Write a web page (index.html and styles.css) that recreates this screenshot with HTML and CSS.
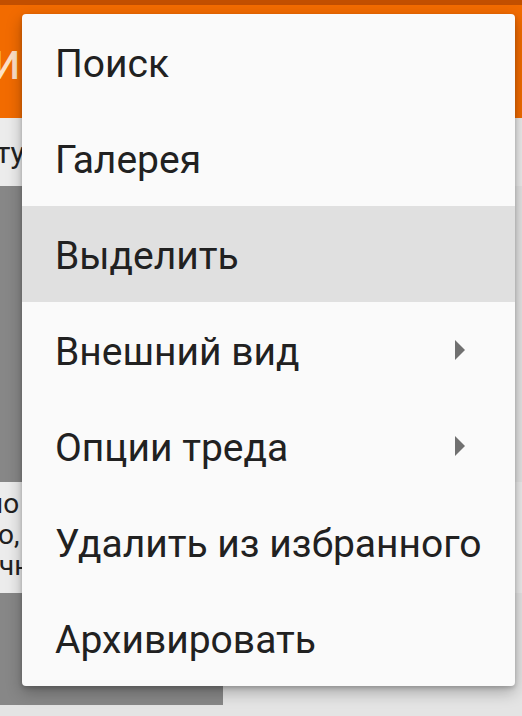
FILE: index.html
```html
<!DOCTYPE html>
<html lang="ru">
<head>
    <meta charset="UTF-8">
    <meta name="viewport" content="width=device-width, initial-scale=1.0">
    <title>Меню треда</title>
    <link rel="stylesheet" href="styles.css">
</head>
<body>
    <div class="statusbar"></div>
    <div class="toolbar">
        <span class="toolbar-title">ИРЫ</span>
    </div>

    <div class="content">
        <div class="post-line"><span class="cut">ту</span></div>
        <div class="thumb"></div>
        <div class="snippet">
            <p class="l1">но</p>
            <p class="l2">о, д</p>
            <p class="l3">чн</p>
        </div>
        <div class="thumb small"></div>
    </div>

    <ul class="popup-menu">
        <li class="menu-item">Поиск</li>
        <li class="menu-item">Галерея</li>
        <li class="menu-item pressed">Выделить</li>
        <li class="menu-item has-sub">Внешний вид <span class="sub-arrow"></span></li>
        <li class="menu-item has-sub">Опции треда <span class="sub-arrow"></span></li>
        <li class="menu-item">Удалить из избранного</li>
        <li class="menu-item">Архивировать</li>
    </ul>
</body>
</html>
```

FILE: styles.css
```css
body {
    margin: 0;
    width: 522px;
    height: 716px;
    overflow: hidden;
    position: relative;
    background-color: #e4e4e4;
    font-family: Roboto, "Noto Sans", sans-serif;
    color: #212121;
}
.statusbar {
    height: 5px;
    background-color: #c24f00;
}
.toolbar {
    height: 113px;
    background-color: #f26b00;
    display: flex;
    align-items: center;
    overflow: hidden;
}
.toolbar-title {
    margin-left: -7px;
    margin-top: 8px;
    font-size: 38px;
    font-weight: 500;
    color: #fde0c6;
    white-space: nowrap;
}
.content {
    background-color: #e4e4e4;
}
.post-line {
    height: 68px;
    background-color: #ececec;
    display: flex;
    align-items: center;
    overflow: hidden;
}
.cut {
    margin-left: -4px;
    font-size: 30px;
    white-space: nowrap;
}
.thumb {
    width: 223px;
    height: 296px;
    background-color: #878787;
}
.thumb.small {
    height: 112px;
}
.snippet {
    height: 111px;
    background-color: #ececec;
    padding-top: 6px;
    box-sizing: border-box;
    overflow: hidden;
}
.snippet p {
    margin: 0;
    font-size: 28px;
    line-height: 31px;
    white-space: nowrap;
}
.snippet .l1 {
    margin-left: -13px;
}
.snippet .l2 {
    margin-left: -2px;
}
.snippet .l3 {
    margin-left: -1px;
}
.popup-menu {
    position: absolute;
    left: 22px;
    top: 14px;
    width: 493px;
    margin: 0;
    padding: 0;
    list-style: none;
    background-color: #fafafa;
    border-radius: 4px;
    box-shadow: 0 6px 16px rgba(0, 0, 0, 0.28), 0 2px 4px rgba(0, 0, 0, 0.18);
    overflow: hidden;
}
.menu-item {
    height: 96px;
    padding: 3px 50px 0 33px;
    box-sizing: border-box;
    display: flex;
    align-items: center;
    font-size: 39px;
    color: #212121;
    white-space: nowrap;
}
.menu-item.pressed {
    background-color: #e0e0e0;
}
.has-sub {
    justify-content: space-between;
}
.sub-arrow {
    width: 0;
    height: 0;
    margin-top: -3px;
    border-top: 10px solid transparent;
    border-bottom: 10px solid transparent;
    border-left: 10px solid #707070;
}
```
